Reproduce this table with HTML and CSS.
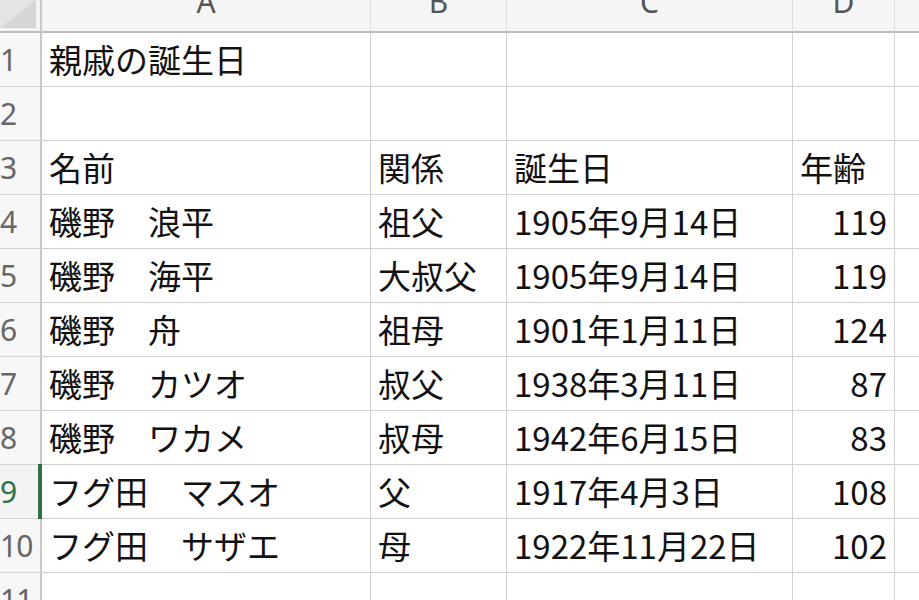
FILE: index.html
```html
<!DOCTYPE html>
<html lang="ja">
<head>
<meta charset="utf-8">
<title>親戚の誕生日</title>
<link rel="stylesheet" href="styles.css">
</head>
<body>
<div class="sheet">
  <div class="corner"><svg class="corner-tri" width="36" height="28" viewBox="0 0 36 28"><rect width="36" height="28" fill="#e4e4e4"/><polygon points="0,28 36,0 36,28" fill="#d6d6d6"/></svg></div>
  <div class="colhdr"><span>A</span></div>
  <div class="colhdr"><span>B</span></div>
  <div class="colhdr"><span>C</span></div>
  <div class="colhdr"><span>D</span></div>
  <div class="colhdr last"><span></span></div>

  <div class="rowhdr">1</div>
  <div class="cell">親戚の誕生日</div><div class="cell"></div><div class="cell"></div><div class="cell"></div><div class="cell last"></div>

  <div class="rowhdr">2</div>
  <div class="cell"></div><div class="cell"></div><div class="cell"></div><div class="cell"></div><div class="cell last"></div>

  <div class="rowhdr">3</div>
  <div class="cell">名前</div><div class="cell">関係</div><div class="cell">誕生日</div><div class="cell">年齢</div><div class="cell last"></div>

  <div class="rowhdr">4</div>
  <div class="cell">磯野　浪平</div><div class="cell">祖父</div><div class="cell">1905年9月14日</div><div class="cell num">119</div><div class="cell last"></div>

  <div class="rowhdr">5</div>
  <div class="cell">磯野　海平</div><div class="cell">大叔父</div><div class="cell">1905年9月14日</div><div class="cell num">119</div><div class="cell last"></div>

  <div class="rowhdr">6</div>
  <div class="cell">磯野　舟</div><div class="cell">祖母</div><div class="cell">1901年1月11日</div><div class="cell num">124</div><div class="cell last"></div>

  <div class="rowhdr">7</div>
  <div class="cell">磯野　カツオ</div><div class="cell">叔父</div><div class="cell">1938年3月11日</div><div class="cell num">87</div><div class="cell last"></div>

  <div class="rowhdr">8</div>
  <div class="cell">磯野　ワカメ</div><div class="cell">叔母</div><div class="cell">1942年6月15日</div><div class="cell num">83</div><div class="cell last"></div>

  <div class="rowhdr sel">9</div>
  <div class="cell">フグ田　マスオ</div><div class="cell">父</div><div class="cell">1917年4月3日</div><div class="cell num">108</div><div class="cell last"></div>

  <div class="rowhdr">10</div>
  <div class="cell">フグ田　サザエ</div><div class="cell">母</div><div class="cell">1922年11月22日</div><div class="cell num">102</div><div class="cell last"></div>

  <div class="rowhdr">11</div>
  <div class="cell"></div><div class="cell"></div><div class="cell"></div><div class="cell"></div><div class="cell last"></div>
</div>
</body>
</html>
```

FILE: styles.css
```css
html, body {
  margin: 0;
  padding: 0;
  background: #ffffff;
  overflow: hidden;
}

.sheet {
  display: grid;
  grid-template-columns: 42px 329px 136px 286px 102px 1fr;
  grid-template-rows: 33px repeat(11, 54px);
  width: 919px;
  height: 600px;
  overflow: hidden;
  font-family: "Noto Sans CJK JP", "Noto Sans", sans-serif;
}

.corner {
  background: #f4f4f4;
  border-right: 2px solid #c9c9c9;
  border-bottom: 2px solid #bdbdbd;
  box-sizing: border-box;
  overflow: hidden;
  display: flex;
  align-items: flex-start;
}

.corner-tri {
  display: block;
}

.colhdr {
  background: #f5f5f5;
  border-right: 1px solid #dcdcdc;
  border-bottom: 2px solid #bdbdbd;
  box-sizing: border-box;
  overflow: hidden;
  display: flex;
  justify-content: center;
  align-items: flex-end;
  color: #555555;
  font-family: "Noto Sans", "Liberation Sans", sans-serif;
  font-size: 30px;
  line-height: 30px;
  padding-bottom: 14px;
}

.colhdr.last {
  border-right: none;
}

.rowhdr {
  background: #f7f7f7;
  border-right: 2px solid #c9c9c9;
  border-bottom: 1px solid #d4d4d4;
  box-sizing: border-box;
  display: flex;
  align-items: center;
  padding-left: 0;
  color: #666666;
  font-family: "Noto Sans", "Liberation Sans", sans-serif;
  font-size: 30px;
  line-height: 1;
  letter-spacing: -1px;
  position: relative;
}

.rowhdr.sel {
  color: #2e7048;
  background: #f3f3f3;
}

.rowhdr.sel::after {
  content: "";
  position: absolute;
  right: -2px;
  top: -1px;
  bottom: -1px;
  width: 4px;
  background: #2e6f45;
  z-index: 2;
}

.cell {
  border-right: 1px solid #d0d0d0;
  border-bottom: 1px solid #d0d0d0;
  box-sizing: border-box;
  display: flex;
  align-items: center;
  padding: 0 7px 0 7px;
  color: #111111;
  font-size: 33px;
  line-height: 1;
  white-space: nowrap;
}

.cell.num {
  justify-content: flex-end;
}

.cell.last {
  border-right: none;
}
```
